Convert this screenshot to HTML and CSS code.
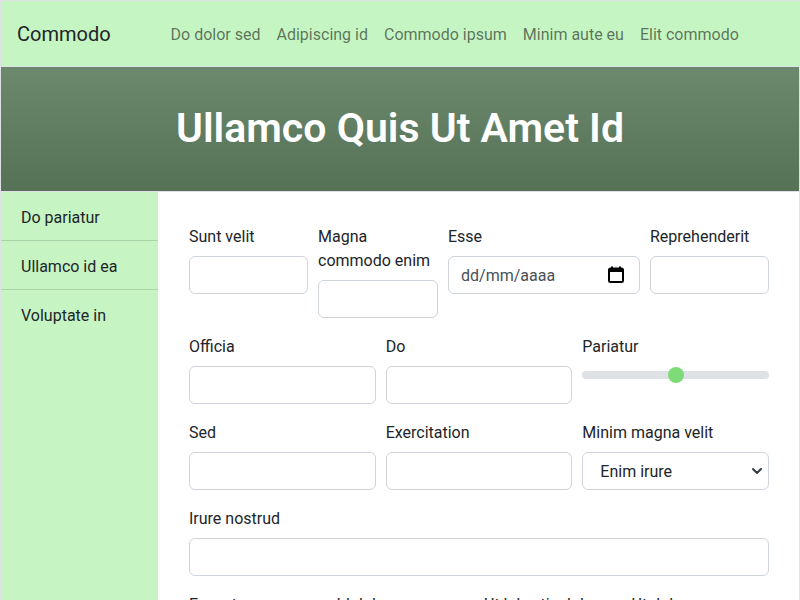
FILE: index.html
```html
<!DOCTYPE html>
<html lang="la">
<head>
<meta charset="utf-8">
<title>Commodo</title>
<link rel="stylesheet" href="styles.css">
</head>
<body>
<div class="page">
  <nav class="navbar">
    <a class="brand" href="#">Commodo</a>
    <ul class="nav-links">
      <li><a href="#">Do dolor sed</a></li>
      <li><a href="#">Adipiscing id</a></li>
      <li><a href="#">Commodo ipsum</a></li>
      <li><a href="#">Minim aute eu</a></li>
      <li><a href="#">Elit commodo</a></li>
    </ul>
  </nav>
  <header class="hero">
    <h1>Ullamco Quis Ut Amet Id</h1>
  </header>
  <div class="layout">
    <aside class="sidebar">
      <a href="#">Do pariatur</a>
      <a href="#">Ullamco id ea</a>
      <a href="#">Voluptate in</a>
    </aside>
    <main class="content">
      <form class="form">
        <div class="row row-four">
          <div class="field"><label>Sunt velit</label><input class="control" type="text"></div>
          <div class="field"><label>Magna commodo enim</label><input class="control" type="text"></div>
          <div class="field">
            <label>Esse</label>
            <div class="date-wrap">
              <input class="control date" type="text" placeholder="dd/mm/aaaa">
              <svg class="cal-icon" width="16" height="17" viewBox="0 0 16 17"><path d="M4 0.5v2M12 0.5v2" stroke="#000" stroke-width="2"/><rect x="1" y="2.5" width="14" height="13.5" rx="1.5" fill="none" stroke="#000" stroke-width="2"/><rect x="1" y="2.5" width="14" height="3.5" fill="#000"/></svg>
            </div>
          </div>
          <div class="field"><label>Reprehenderit</label><input class="control" type="text"></div>
        </div>
        <div class="row row-three">
          <div class="field"><label>Officia</label><input class="control" type="text"></div>
          <div class="field"><label>Do</label><input class="control" type="text"></div>
          <div class="field"><label>Pariatur</label><input class="range" type="range" min="0" max="100" value="50"></div>
        </div>
        <div class="row row-three">
          <div class="field"><label>Sed</label><input class="control" type="text"></div>
          <div class="field"><label>Exercitation</label><input class="control" type="text"></div>
          <div class="field">
            <label>Minim magna velit</label>
            <div class="select-wrap">
              <select class="control select"><option>Enim irure</option><option>Aute dolor</option></select>
              <svg class="chevron" width="12" height="8" viewBox="0 0 12 8"><path d="M2 2l4 4 4-4" fill="none" stroke="#343a40" stroke-width="2" stroke-linecap="round" stroke-linejoin="round"/></svg>
            </div>
          </div>
        </div>
        <div class="row row-one">
          <div class="field"><label>Irure nostrud</label><input class="control" type="text"></div>
        </div>
        <div class="row row-quarter">
          <div class="field"><label>Excepteur</label><input class="control" type="text"></div>
          <div class="field"><label>Id dolore</label><input class="control" type="text"></div>
          <div class="field"><label>Ut lobortis dolor</label><input class="control" type="text"></div>
          <div class="field"><label>Ut dolor</label><input class="control" type="text"></div>
        </div>
      </form>
    </main>
  </div>
</div>
</body>
</html>
```

FILE: styles.css
```css
* { box-sizing: border-box; }

html { scrollbar-width: none; }
html::-webkit-scrollbar { display: none; }

body {
  margin: 0;
  font-family: "Segoe UI", Roboto, "Noto Sans", "Liberation Sans", sans-serif;
  font-size: 16px;
  line-height: 1.5;
  color: #212529;
  background: #fff;
}

.page {
  border: 1px solid #dee2e6;
}

.navbar {
  display: flex;
  align-items: center;
  height: 66px;
  padding: 0 16px;
  background: #c5f5c2;
  border-bottom: 1px solid #dee2e6;
}

.brand {
  font-size: 20px;
  color: #212529;
  text-decoration: none;
  margin-right: 52px;
}

.nav-links {
  display: flex;
  list-style: none;
  margin: 0;
  padding: 0;
}

.nav-links a {
  display: block;
  padding: 9px 8px 7px;
  color: rgba(0, 0, 0, 0.55);
  text-decoration: none;
}

.hero {
  height: 125px;
  display: flex;
  align-items: center;
  justify-content: center;
  background: linear-gradient(to bottom, #6c896e, #557156);
  border-bottom: 1px solid #dee2e6;
}

.hero h1 {
  margin: 0;
  font-size: 41px;
  font-weight: 600;
  line-height: 1.2;
  color: #fff;
}

.layout {
  display: flex;
}

.sidebar {
  width: 157px;
  flex: none;
  background: #c6f4c3;
  min-height: 420px;
  display: flex;
  flex-direction: column;
}

.sidebar a {
  display: block;
  padding: 14px 20px 10px;
  color: #212529;
  text-decoration: none;
  border-bottom: 1px solid #abd3aa;
}

.sidebar a:last-child {
  border-bottom: none;
}

.content {
  flex: 1;
  padding: 32px 30px 0 31px;
}

.row {
  display: grid;
  column-gap: 10px;
  margin-bottom: 16px;
  align-items: start;
}

.row-four { grid-template-columns: 119fr 120fr 192fr 119fr; }
.row-three { grid-template-columns: 1fr 1fr 1fr; }
.row-one { grid-template-columns: 1fr; }
.row-quarter { grid-template-columns: 1fr 1fr 1fr 1fr; }

.field label {
  display: block;
  padding-top: 1px;
  margin-bottom: 7px;
}

.control {
  display: block;
  width: 100%;
  height: 38px;
  padding: 6px 12px;
  font: inherit;
  color: #212529;
  background: #fff;
  border: 1px solid #ced4da;
  border-radius: 6px;
}

.date-wrap,
.select-wrap {
  position: relative;
}

.date::placeholder {
  color: #495057;
  opacity: 1;
}

.cal-icon {
  position: absolute;
  right: 16px;
  top: 10px;
}

.select {
  appearance: none;
  -webkit-appearance: none;
  padding: 7px 36px 5px 17px;
}

.chevron {
  position: absolute;
  right: 6px;
  top: 15px;
  pointer-events: none;
}

.range {
  -webkit-appearance: none;
  appearance: none;
  display: block;
  width: 100%;
  height: 18px;
  margin: 0;
  padding: 0;
  background: transparent;
}

.range::-webkit-slider-runnable-track {
  height: 8px;
  background: #dee2e6;
  border-radius: 4px;
}

.range::-webkit-slider-thumb {
  -webkit-appearance: none;
  appearance: none;
  width: 16px;
  height: 16px;
  margin-top: -4px;
  border: none;
  border-radius: 50%;
  background: #7ddc77;
}
```
